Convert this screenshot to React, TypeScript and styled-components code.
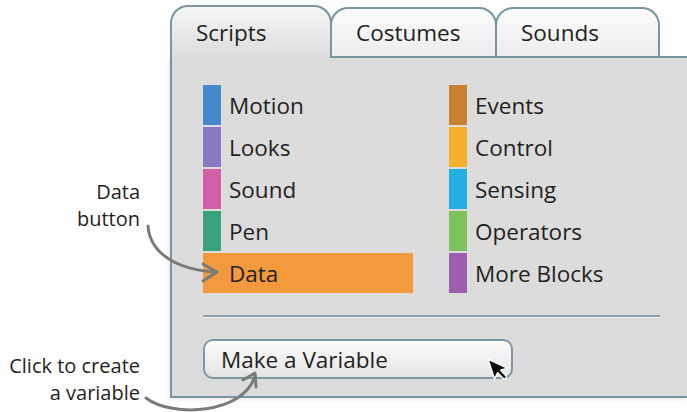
import React from "react";
import styled, { createGlobalStyle } from "styled-components";

const GlobalStyle = createGlobalStyle`
  html, body {
    margin: 0;
    padding: 0;
    background: #ffffff;
  }
  body {
    font-family: "Open Sans", "Noto Sans", sans-serif;
    color: #231f20;
    overflow: hidden;
  }
`;

const Page = styled.div`
  position: relative;
  display: flex;
  align-items: flex-start;
  width: 687px;
  height: 412px;
`;

const Notes = styled.div`
  width: 140px;
  padding-right: 30px;
  display: flex;
  flex-direction: column;
  align-items: flex-end;
`;

const Note = styled.div<{ $top: number }>`
  margin-top: ${(p) => p.$top}px;
  font-size: 20px;
  line-height: 27px;
  text-align: right;
  color: #231f20;
`;

const Panel = styled.div`
  flex: 1;
  display: flex;
  flex-direction: column;
`;

const TabBar = styled.div`
  display: flex;
  align-items: flex-end;
  height: 58px;
`;

const Tab = styled.div<{ $active?: boolean; $width: number }>`
  box-sizing: border-box;
  width: ${(p) => p.$width}px;
  height: ${(p) => (p.$active ? 53 : 51)}px;
  margin-left: ${(p) => (p.$active ? 0 : -2)}px;
  padding-left: 24px;
  display: flex;
  align-items: center;
  font-size: 22.5px;
  border: 2px solid #7895a1;
  border-bottom: ${(p) => (p.$active ? "none" : "2px solid #7895a1")};
  border-radius: 18px 18px 0 0;
  background: ${(p) =>
    p.$active
      ? "linear-gradient(#f6f6f6, #dcdcdc)"
      : "linear-gradient(#fbfbfb, #ededed)"};
  position: relative;
  z-index: ${(p) => (p.$active ? 2 : 1)};
`;

const TabFiller = styled.div`
  flex: 1;
  margin-left: -2px;
  border-bottom: 2px solid #7895a1;
`;

const Body = styled.div`
  box-sizing: border-box;
  background: #dcdcdc;
  border-left: 2px solid #7895a1;
  border-bottom: 2px solid #7895a1;
  padding: 27px 27px 17px 31px;
  box-shadow: -2px 2px 4px rgba(0, 0, 0, 0.08);
`;

const Categories = styled.div`
  display: grid;
  grid-template-columns: 246px auto;
  grid-auto-flow: column;
  grid-template-rows: repeat(5, 40px);
  row-gap: 2px;
`;

const Category = styled.div<{ $active?: boolean }>`
  display: flex;
  align-items: center;
  gap: 8px;
  height: 40px;
  width: ${(p) => (p.$active ? "210px" : "auto")};
  background: ${(p) => (p.$active ? "#f39a3e" : "transparent")};
  font-size: 22.5px;
`;

const Swatch = styled.span<{ $color: string }>`
  width: 18px;
  height: 40px;
  background: ${(p) => p.$color};
`;

const Divider = styled.div`
  margin-top: 22px;
  height: 2px;
  background: #8ba1ab;
  box-shadow: 0 1px 0 rgba(255, 255, 255, 0.6);
`;

const VariableButton = styled.div`
  position: relative;
  box-sizing: border-box;
  margin-top: 22px;
  width: 310px;
  height: 40px;
  padding-left: 16px;
  display: flex;
  align-items: center;
  font-size: 22.5px;
  border: 2px solid #7d98a4;
  border-radius: 10px;
  background: linear-gradient(#fdfdfd, #e4e4e4);
`;

const Cursor = styled.svg`
  position: absolute;
  left: 280px;
  top: 15px;
`;

const Arrows = styled.svg`
  position: absolute;
  left: 0;
  top: 0;
  pointer-events: none;
  z-index: 5;
`;

const left = [
  { name: "Motion", color: "#4688cc" },
  { name: "Looks", color: "#8a78c0" },
  { name: "Sound", color: "#d35fa6" },
  { name: "Pen", color: "#3aa37e" },
  { name: "Data", color: "#f39a3e", active: true },
];

const right = [
  { name: "Events", color: "#c9812f" },
  { name: "Control", color: "#f5b12c" },
  { name: "Sensing", color: "#24aee3" },
  { name: "Operators", color: "#7dc15a" },
  { name: "More Blocks", color: "#9c5fae" },
];

export default function App() {
  return (
    <Page>
      <GlobalStyle />
      <Notes>
        <Note $top={178}>
          Data
          <br />
          button
        </Note>
        <Note $top={120}>
          Click to create
          <br />
          a variable
        </Note>
      </Notes>
      <Panel>
        <TabBar>
          <Tab $active $width={162}>Scripts</Tab>
          <Tab $width={167}>Costumes</Tab>
          <Tab $width={165}>Sounds</Tab>
          <TabFiller />
        </TabBar>
        <Body>
          <Categories>
            {[...left, ...right].map((c) => (
              <Category key={c.name} $active={"active" in c}>
                <Swatch $color={c.color} />
                {c.name}
              </Category>
            ))}
          </Categories>
          <Divider />
          <VariableButton>
            Make a Variable
            <Cursor width="22" height="32" viewBox="0 0 22 32">
              <g transform="rotate(-18 3 3)">
                <path
                  d="M3 3 L3 24 L8 19 L12 27.5 L15.5 26 L11.6 17.6 L18.5 17.6 Z"
                  fill="#111"
                  stroke="#fff"
                  strokeWidth="1.4"
                  strokeLinejoin="round"
                />
              </g>
            </Cursor>
          </VariableButton>
        </Body>
      </Panel>
      <Arrows width="687" height="412" viewBox="0 0 687 412">
        <g fill="none" stroke="#7a7a7a" strokeWidth="3" strokeLinecap="round" strokeLinejoin="round">
          <path d="M148 226 C150 254 178 270 216 272" />
          <path d="M203 264 L217 272 L203 281" />
          <path d="M146 398 C172 418 244 414 255 376" />
          <path d="M243 380 L255 373 L256 387" />
        </g>
      </Arrows>
    </Page>
  );
}
